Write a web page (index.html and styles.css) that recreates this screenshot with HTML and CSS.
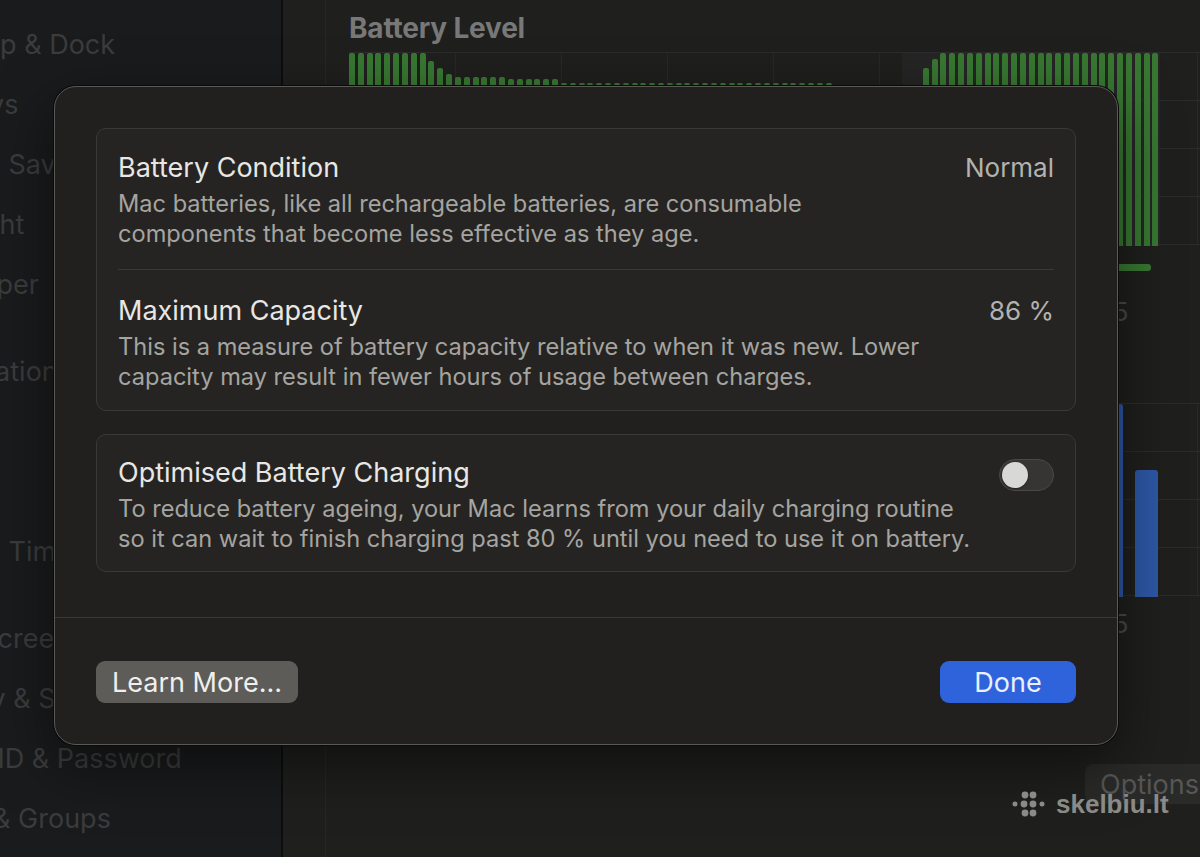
FILE: index.html
```html
<!DOCTYPE html>
<html lang="en">
<head>
  <meta charset="UTF-8" />
  <title>Battery Health</title>
  <meta name="viewport" content="width=device-width, initial-scale=1.0"/>
  <link rel="stylesheet" href="styles.css">
</head>
<body>
  <div class="window">
    <aside class="sidebar">
      <ul class="nav">
        <li>Desktop &amp; Dock</li>
        <li>Displays</li>
        <li>Screen Saver</li>
        <li>Spotlight</li>
        <li class="group-end">Wallpaper</li>
        <li>Notifications</li>
        <li>Sound</li>
        <li>Focus</li>
        <li class="group-end">Screen Time</li>
        <li>Lock Screen</li>
        <li>Privacy &amp; Security</li>
        <li>Touch ID &amp; Password</li>
        <li>Users &amp; Groups</li>
      </ul>
    </aside>

    <main class="content">
      <h2 class="chart-title">Battery Level</h2>
      <div class="chart chart-level">
        <i style="height:100%"></i><i style="height:100%"></i><i style="height:100%"></i><i style="height:100%"></i><i style="height:100%"></i><i style="height:100%"></i><i style="height:100%"></i><i style="height:100%"></i><i style="height:100%"></i>
        <i style="height:96%"></i><i style="height:92%"></i><i style="height:89%"></i>
        <i style="height:87.5%"></i><i style="height:87.5%"></i><i style="height:87.5%"></i><i style="height:87.5%"></i><i style="height:87.5%"></i><i style="height:87.5%"></i>
        <i style="height:86.5%"></i><i style="height:86.5%"></i><i style="height:86.5%"></i><i style="height:86.5%"></i><i style="height:86.5%"></i><i style="height:86.5%"></i>
        <i style="height:84.5%"></i><i style="height:84.5%"></i><i style="height:84.5%"></i><i style="height:84.5%"></i><i style="height:84.5%"></i><i style="height:84.5%"></i><i style="height:84.5%"></i><i style="height:84.5%"></i><i style="height:84.5%"></i><i style="height:84.5%"></i>
        <i style="height:84.5%"></i><i style="height:84.5%"></i><i style="height:84.5%"></i><i style="height:84.5%"></i><i style="height:84.5%"></i><i style="height:84.5%"></i><i style="height:84.5%"></i><i style="height:84.5%"></i><i style="height:84.5%"></i><i style="height:84.5%"></i>
        <i style="height:84.5%"></i><i style="height:84.5%"></i><i style="height:84.5%"></i><i style="height:84.5%"></i><i style="height:84.5%"></i><i style="height:84.5%"></i><i style="height:84.5%"></i><i style="height:84.5%"></i><i style="height:84.5%"></i><i style="height:84.5%"></i>
        <i style="height:84.5%"></i>
        <i style="height:80%"></i><i style="height:80%"></i><i style="height:79%"></i><i style="height:79%"></i><i style="height:78%"></i><i style="height:78%"></i><i style="height:77%"></i><i style="height:77%"></i><i style="height:76%"></i><i style="height:76%"></i>
        <i style="height:92%"></i><i style="height:97%"></i>
        <i style="height:100%"></i><i style="height:100%"></i><i style="height:100%"></i><i style="height:100%"></i><i style="height:100%"></i><i style="height:100%"></i><i style="height:100%"></i><i style="height:100%"></i><i style="height:100%"></i><i style="height:100%"></i>
        <i style="height:100%"></i><i style="height:100%"></i><i style="height:100%"></i><i style="height:100%"></i><i style="height:100%"></i><i style="height:100%"></i><i style="height:100%"></i><i style="height:100%"></i><i style="height:100%"></i><i style="height:100%"></i>
        <i style="height:100%"></i><i style="height:100%"></i><i style="height:100%"></i><i style="height:100%"></i><i style="height:100%"></i>
      </div>
      <div class="charge"></div>
      <div class="axis"><span>15</span></div>

      <div class="chart chart-usage">
        <i style="height:0%"></i><i style="height:0%"></i><i style="height:0%"></i><i style="height:0%"></i><i style="height:0%"></i><i style="height:0%"></i>
        <i style="height:0%"></i><i style="height:0%"></i><i style="height:22%"></i><i style="height:48%"></i><i style="height:30%"></i><i style="height:0%"></i>
        <i style="height:0%"></i><i style="height:0%"></i><i style="height:0%"></i><i style="height:55%"></i><i style="height:80%"></i><i style="height:40%"></i>
        <i style="height:0%"></i><i style="height:0%"></i><i style="height:60%"></i><i style="height:100%"></i><i style="height:66%"></i><i style="height:0%"></i>
      </div>
      <div class="axis axis-second"><span>15</span></div>

      <div class="options-row">
        <button class="options">Options...</button>
      </div>
    </main>
  </div>

  <div class="sheet">
    <div class="sheet-body">
      <div class="group">
        <div class="row">
          <div class="row-head">
            <span class="row-title">Battery Condition</span>
            <span class="row-value">Normal</span>
          </div>
          <p class="row-desc">Mac batteries, like all rechargeable batteries, are consumable<br>components that become less effective as they age.</p>
        </div>
        <div class="sep"></div>
        <div class="row">
          <div class="row-head">
            <span class="row-title">Maximum Capacity</span>
            <span class="row-value">86 %</span>
          </div>
          <p class="row-desc">This is a measure of battery capacity relative to when it was new. Lower<br>capacity may result in fewer hours of usage between charges.</p>
        </div>
      </div>

      <div class="group">
        <div class="row row-toggle">
          <div class="row-text">
            <span class="row-title">Optimised Battery Charging</span>
            <p class="row-desc">To reduce battery ageing, your Mac learns from your daily charging routine<br>so it can wait to finish charging past 80 % until you need to use it on battery.</p>
          </div>
          <span class="toggle"><span class="knob"></span></span>
        </div>
      </div>
    </div>

    <div class="sheet-footer">
      <button class="btn btn-secondary">Learn More...</button>
      <button class="btn btn-primary">Done</button>
    </div>
  </div>

  <div class="watermark">
    <svg width="34" height="28" viewBox="0 0 34 28">
      <g fill="#8a8a87">
        <circle cx="13" cy="5" r="3.4"/>
        <circle cx="21" cy="5" r="3.4"/>
        <circle cx="3" cy="14" r="2.5"/>
        <circle cx="12" cy="14" r="3.4"/>
        <circle cx="21" cy="14" r="3.4"/>
        <circle cx="30" cy="14" r="2.5"/>
        <circle cx="13" cy="23" r="3.4"/>
        <circle cx="21" cy="23" r="3.4"/>
      </g>
    </svg>
    <span>skelbiu.lt</span>
  </div>
</body>
</html>
```

FILE: styles.css
```css
* { box-sizing: border-box; }
html, body { margin: 0; height: 100%; }
body { background: #1e1e1d; font-family: Inter, "Noto Sans", sans-serif; overflow: hidden; }

/* background window (dimmed by the sheet) */
.window { display: flex; height: 857px; }
.sidebar { width: 283px; flex: none; background: #1a1b1c; border-right: 2px solid #0d0d0d; overflow: hidden; }
.nav { list-style: none; margin: 0 0 0 -89px; padding: 15px 0 0; }
.nav li { height: 60px; line-height: 60px; font-size: 27px; color: #3b3c3d; white-space: nowrap; }
.nav .group-end { margin-bottom: 27px; }

.content {
  flex: 1; min-width: 0; overflow: hidden; padding: 12px 0 0 66px;
  background: linear-gradient(to right, transparent 42px, #272727 42px, #272727 43px, transparent 43px), #1f1f1e;
}
.chart-title { margin: 0 0 8px; font-size: 28px; line-height: 32px; font-weight: 700; color: #787878; letter-spacing: -0.2px; white-space: nowrap; }

.chart {
  width: 860px; height: 194px; display: flex; align-items: flex-end;
  border-top: 1px solid #2c2c2c;
  background-image:
    repeating-linear-gradient(to bottom, transparent 0 47px, #2a2a2a 47px 48px),
    repeating-linear-gradient(to right, #282828 0 1px, transparent 1px 106px);
}
.chart-level {
  background-image:
    repeating-linear-gradient(to bottom, transparent 0 47px, #2a2a2a 47px 48px),
    repeating-linear-gradient(to right, #282828 0 1px, transparent 1px 106px),
    linear-gradient(to right, transparent 553px, #252525 553px, #252525 811px, transparent 811px);
}
.chart-level i { flex: none; width: 6px; margin-right: 2.83px; background: #387832; border-radius: 2px 2px 0 0; }
.chart-usage { margin-top: 77px; padding-left: 9px; gap: 12.33px; }
.chart-usage i { flex: none; width: 23px; background: #2d57a6; border-radius: 3px 3px 0 0; }

.charge { width: 228px; height: 7px; margin: 18px 0 0 574px; background: #387832; border-radius: 3px; }
.axis { display: flex; justify-content: flex-end; width: 860px; height: 28px; margin-top: 27px; font-size: 25px; line-height: 28px; color: #4a4a4a; }
.axis span { flex: none; width: 118px; padding-left: 12px; }
.axis-second { margin-top: 13px; }

.options-row { width: 860px; display: flex; justify-content: flex-end; margin-top: 126px; }
.options { width: 124px; height: 40px; padding: 0 0 0 15px; text-align: left; white-space: nowrap; overflow: hidden; font: 27px Inter, sans-serif; color: #575757; background: #2a2a29; border: none; border-radius: 8px; }

/* sheet */
.sheet {
  position: absolute; left: 54px; top: 86px; width: 1064px; height: 659px;
  display: flex; flex-direction: column;
  background: #21201e; border: 1px solid #5a5957; border-radius: 22px;
  box-shadow: 0 0 0 1px #0a0a0a, 0 20px 60px rgba(0, 0, 0, 0.5);
}
.sheet-body { flex: 1; display: flex; flex-direction: column; gap: 23px; padding: 41px 41px 0; }
.group { border: 1px solid #3a3937; border-radius: 10px; background: #252422; }
.row { padding: 23px 21px 20px; }
.sep + .row { padding-top: 25px; padding-bottom: 18px; }
.sep { height: 1px; margin: 0 21px; background: #3a3937; }
.row-head { display: flex; justify-content: space-between; align-items: center; }
.row-title { display: block; font-size: 27px; line-height: 32px; color: #e8e7e4; }
.row-value { font-size: 26px; line-height: 32px; color: #b3b2ae; }
.row-desc { margin: 5px 0 0; font-size: 23.6px; line-height: 30px; color: #a5a4a0; white-space: nowrap; }
.row-toggle { display: flex; justify-content: space-between; align-items: flex-start; padding-top: 22px; padding-bottom: 17px; }
.toggle { flex: none; width: 55px; height: 32px; margin-top: 2px; padding: 2px; border-radius: 16px; background: #363532; border: 1px solid #4a4946; }
.knob { display: block; width: 26px; height: 26px; border-radius: 50%; background: #d8d8d6; box-shadow: 0 1px 2px rgba(0,0,0,.4); }

.sheet-footer { display: flex; justify-content: space-between; padding: 43px 41px 41px; border-top: 1px solid #3a3937; }
.btn { height: 42px; border: none; border-radius: 9px; font: 27px Inter, sans-serif; }
.btn-secondary { width: 202px; background: #5d5c59; color: #efefee; }
.btn-primary { width: 136px; background: #2f63dc; color: #e9f0ff; }

.watermark { position: absolute; left: 1012px; top: 790px; display: flex; align-items: center; gap: 10px; }
.watermark span { font: bold 26px "Liberation Sans", sans-serif; color: #8a8a87; line-height: 28px; }
```
